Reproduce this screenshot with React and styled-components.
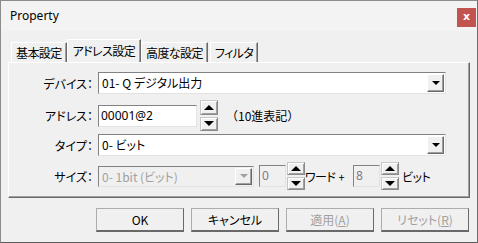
import React from 'react';
import styled, { createGlobalStyle, css } from 'styled-components';

const GlobalStyle = createGlobalStyle`
    html, body {
        margin: 0;
        padding: 0;
        background: #f0f0f0;
    }
    body {
        font-family: "Noto Sans CJK JP", "Noto Sans", sans-serif;
        font-size: 12px;
        color: #000;
    }
`;

const tabs = ['基本設定', 'アドレス設定', '高度な設定', 'フィルタ'];

const buttons = [
    { label: 'OK' },
    { label: 'キャンセル' },
    { label: '適用', key: 'A', disabled: true },
    { label: 'リセット', key: 'R', disabled: true },
];

function Spin({ tall }) {
    return (
        <SpinBox $tall={tall}>
            <SpinButton><Arrow $up /></SpinButton>
            <SpinButton><Arrow /></SpinButton>
        </SpinBox>
    );
}

function Combo({ value, width, disabled }) {
    return (
        <ComboBox $width={width} $disabled={disabled}>
            <ComboText>{value}</ComboText>
            <DropButton><Arrow $small $disabled={disabled} /></DropButton>
        </ComboBox>
    );
}

export default function App() {
    return (
        <>
            <GlobalStyle />
            <Window>
                <TitleBar>
                    <Title>Property</Title>
                    <Close>x</Close>
                </TitleBar>
                <Body>
                    <TabStrip>
                        {tabs.map((t, i) => (
                            <Tab key={t} $active={i === 1}>{t}</Tab>
                        ))}
                    </TabStrip>
                    <Panel>
                        <Row>
                            <Label>デバイス：</Label>
                            <Combo value="01- Q デジタル出力" width={348} />
                        </Row>
                        <Row $gap={6}>
                            <Label>アドレス：</Label>
                            <Edit $width={99}>00001@2</Edit>
                            <Spin tall />
                            <Note>（10進表記）</Note>
                        </Row>
                        <Row $gap={3}>
                            <Label>タイプ：</Label>
                            <Combo value="0- ビット" width={348} />
                        </Row>
                        <Row $gap={6}>
                            <Label>サイズ：</Label>
                            <Combo value="0- 1bit (ビット)" width={156} disabled />
                            <Edit $width={27} $disabled $left={5}>0</Edit>
                            <Spin />
                            <Unit>ワード<Plus>+</Plus></Unit>
                            <Edit $width={27} $disabled $left={9}>8</Edit>
                            <Spin />
                            <Unit $left={3}>ビット</Unit>
                        </Row>
                    </Panel>
                    <ButtonRow>
                        {buttons.map((b) => (
                            <Button key={b.label} $disabled={b.disabled}>
                                {b.label}
                                {b.key && <>(<u>{b.key}</u>)</>}
                            </Button>
                        ))}
                    </ButtonRow>
                </Body>
            </Window>
        </>
    );
}

const raised = css`
    border-top: 1px solid #fff;
    border-left: 1px solid #fff;
    border-right: 1px solid #696969;
    border-bottom: 1px solid #696969;
    box-shadow: inset -1px -1px 0 #a0a0a0;
`;

const sunken = css`
    border-top: 1px solid #828282;
    border-left: 1px solid #828282;
    border-right: 1px solid #e3e3e3;
    border-bottom: 1px solid #e3e3e3;
`;

const Window = styled.div`
    box-sizing: border-box;
    width: 478px;
    height: 243px;
    border: 1px solid #8c8c8c;
    border-right-color: #6e6e6e;
    border-bottom-color: #5a5a5a;
    background: #f0f0f0;
    overflow: hidden;
`;

const TitleBar = styled.div`
    height: 30px;
    background: #f3f3f3;
    display: flex;
    align-items: center;
    justify-content: space-between;
    padding: 0 0 0 9px;
`;

const Title = styled.div`
    font-family: "Noto Sans", "Noto Sans CJK JP", sans-serif;
    font-size: 12px;
    color: #000;
    margin-top: -1px;
`;

const Close = styled.div`
    width: 19px;
    height: 19px;
    margin-right: 1px;
    margin-top: 3px;
    background: #c2544f;
    color: #fff;
    font-family: "DejaVu Sans", sans-serif;
    font-weight: bold;
    font-size: 11px;
    line-height: 17px;
    text-align: center;
`;

const Body = styled.div`
    padding: 8px 8px 0 7px;
`;

const TabStrip = styled.div`
    display: flex;
    align-items: flex-end;
    height: 23px;
    padding-left: 2px;
`;

const Tab = styled.div`
    box-sizing: border-box;
    height: ${(p) => (p.$active ? '23px' : '20px')};
    padding: 0 ${(p) => (p.$active ? '5px' : '4px')};
    margin: 0 ${(p) => (p.$active ? '-1px' : '1px')};
    position: relative;
    z-index: ${(p) => (p.$active ? 1 : 0)};
    border-top: 1px solid #fff;
    border-left: 1px solid #fff;
    border-right: 1px solid #696969;
    box-shadow: inset -1px 0 0 #a0a0a0;
    background: #f0f0f0;
    font-size: 12px;
    letter-spacing: -0.6px;
    line-height: ${(p) => (p.$active ? '21px' : '19px')};
    font-feature-settings: "palt";
    white-space: nowrap;
`;

const Panel = styled.div`
    box-sizing: border-box;
    width: 462px;
    height: 136px;
    padding: 9px 0 0 0;
    border-top: 1px solid #fff;
    border-left: 1px solid #fff;
    border-right: 1px solid #696969;
    border-bottom: 1px solid #696969;
    box-shadow: inset -1px -1px 0 #a0a0a0;
`;

const Row = styled.div`
    display: flex;
    align-items: center;
    margin-top: ${(p) => p.$gap || 0}px;
`;

const Label = styled.div`
    width: 84px;
    margin-right: 5px;
    text-align: right;
    font-size: 12px;
    font-feature-settings: "palt";
    white-space: nowrap;
`;

const ComboBox = styled.div`
    box-sizing: border-box;
    width: ${(p) => p.$width}px;
    height: ${(p) => (p.$disabled ? 21 : 22)}px;
    ${sunken};
    padding: 1px;
    background: ${(p) => (p.$disabled ? '#f0f0f0' : '#fff')};
    color: ${(p) => (p.$disabled ? '#a0a0a0' : '#000')};
    display: flex;
    align-items: stretch;
`;

const ComboText = styled.div`
    flex: 1;
    padding-left: 2px;
    font-size: 12px;
    line-height: 18px;
    font-feature-settings: "palt";
    white-space: nowrap;
`;

const DropButton = styled.div`
    box-sizing: border-box;
    width: 17px;
    ${raised};
    background: #f0f0f0;
    display: flex;
    align-items: center;
    justify-content: center;
`;

const Arrow = styled.span`
    width: 0;
    height: 0;
    border-left: ${(p) => (p.$small ? 4 : 5)}px solid transparent;
    border-right: ${(p) => (p.$small ? 4 : 5)}px solid transparent;
    ${(p) =>
        p.$up
            ? css`border-bottom: 5px solid #000;`
            : css`border-top: ${p.$small ? 4 : 5}px solid ${p.$disabled ? '#a0a0a0' : '#000'};`}
`;

const Edit = styled.div`
    box-sizing: border-box;
    width: ${(p) => p.$width}px;
    height: 22px;
    margin-left: ${(p) => p.$left || 0}px;
    ${sunken};
    background: ${(p) => (p.$disabled ? '#f0f0f0' : '#fff')};
    color: ${(p) => (p.$disabled ? '#7a7a8a' : '#000')};
    padding-left: 2px;
    font-family: "Noto Sans", "Noto Sans CJK JP", sans-serif;
    font-size: 12px;
    line-height: 20px;
`;

const SpinBox = styled.div`
    display: flex;
    flex-direction: column;
    justify-content: space-between;
    width: 18px;
    height: ${(p) => (p.$tall ? 31 : 28)}px;
    margin-left: ${(p) => (p.$tall ? 3 : 1)}px;
`;

const SpinButton = styled.div`
    box-sizing: border-box;
    height: calc(50% - 1px);
    border: 1px solid #8a8a8a;
    border-top-color: #c8c8c8;
    border-left-color: #c8c8c8;
    box-shadow: inset 1px 1px 0 #fff, inset -1px -1px 0 #a0a0a0;
    background: #f0f0f0;
    display: flex;
    align-items: center;
    justify-content: center;
`;

const Note = styled.div`
    margin-left: 8px;
    font-size: 12px;
    white-space: nowrap;
`;

const Unit = styled.div`
    margin-left: ${(p) => p.$left || 0}px;
    font-size: 12px;
    letter-spacing: -0.5px;
    font-feature-settings: "palt";
    white-space: nowrap;
`;

const Plus = styled.span`
    margin-left: 3px;
    font-size: 11px;
`;

const ButtonRow = styled.div`
    display: flex;
    justify-content: flex-end;
    gap: 7px;
    margin-top: 10px;
    padding-right: 0;
`;

const Button = styled.div`
    box-sizing: border-box;
    width: 88px;
    height: 24px;
    border: 1px solid #adadad;
    border-right-color: #696969;
    border-bottom: 2px solid #696969;
    background: #f0f0f0;
    color: ${(p) => (p.$disabled ? '#a0a0a0' : '#000')};
    display: flex;
    align-items: center;
    justify-content: center;
    font-size: 12px;
    font-feature-settings: "palt";
    white-space: nowrap;
`;
